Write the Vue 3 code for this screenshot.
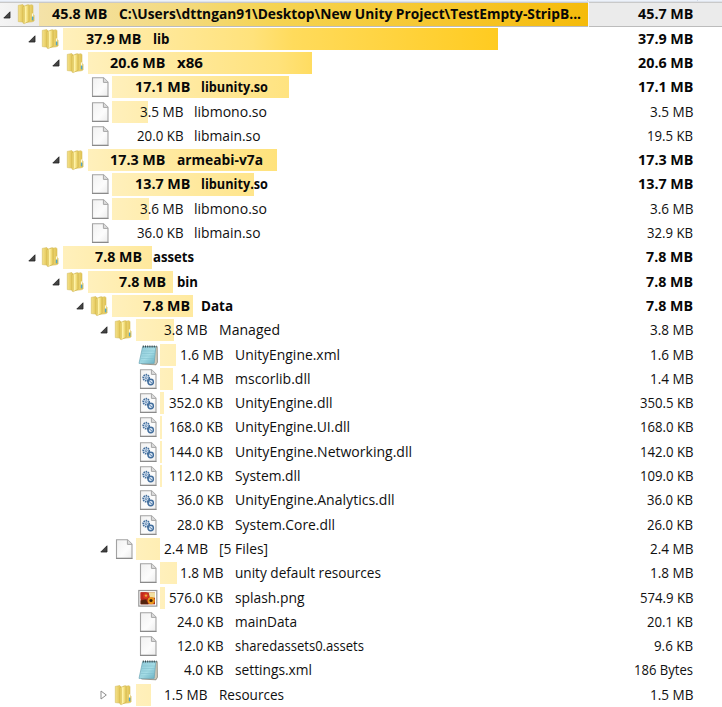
<script setup>
// depth, icon, bar width, size label, its width, name, name width, bold, total label, its width
const source = [
  [0, 'folder', 549, '45.8 MB', 55.5, 'C:\\Users\\dttngan91\\Desktop\\New Unity Project\\TestEmpty-StripB...', 462, 1, '45.7 MB', 55.5],
  [1, 'folder', 434.7, '37.9 MB', 55.5, 'lib', 16.5, 1, '37.9 MB', 55.5],
  [2, 'folder', 224.4, '20.6 MB', 55.5, 'x86', 26, 1, '20.6 MB', 55.5],
  [3, 'file', 177, '17.1 MB', 55.5, 'libunity.so', 67, 1, '17.1 MB', 55.5],
  [3, 'file', 36, '3.5 MB', 43.5, 'libmono.so', 73, 0, '3.5 MB', 43.5],
  [3, 'file', 0, '20.0 KB', 46.5, 'libmain.so', 66.5, 0, '19.5 KB', 46],
  [2, 'folder', 189.5, '17.3 MB', 55.5, 'armeabi-v7a', 86, 1, '17.3 MB', 55.5],
  [3, 'file', 142, '13.7 MB', 55.5, 'libunity.so', 67, 1, '13.7 MB', 55.5],
  [3, 'file', 37, '3.6 MB', 43.5, 'libmono.so', 73, 0, '3.6 MB', 43.5],
  [3, 'file', 0, '36.0 KB', 46.5, 'libmain.so', 66.5, 0, '32.9 KB', 46],
  [1, 'folder', 88.7, '7.8 MB', 47, 'assets', 41, 1, '7.8 MB', 47],
  [2, 'folder', 85, '7.8 MB', 47, 'bin', 21, 1, '7.8 MB', 47],
  [3, 'folder', 81, '7.8 MB', 47, 'Data', 32, 1, '7.8 MB', 47],
  [4, 'folder', 38, '3.8 MB', 43.5, 'Managed', 61, 0, '3.8 MB', 43.5],
  [5, 'note', 15.7, '1.6 MB', 43.5, 'UnityEngine.xml', 105, 0, '1.6 MB', 43.5],
  [5, 'dll', 12.3, '1.4 MB', 43.5, 'mscorlib.dll', 75.5, 0, '1.4 MB', 43.5],
  [5, 'dll', 4, '352.0 KB', 54, 'UnityEngine.dll', 97.5, 0, '350.5 KB', 53.5],
  [5, 'dll', 1.6, '168.0 KB', 54, 'UnityEngine.UI.dll', 115, 0, '168.0 KB', 53.5],
  [5, 'dll', 1.6, '144.0 KB', 54, 'UnityEngine.Networking.dll', 177, 0, '142.0 KB', 53.5],
  [5, 'dll', 1.4, '112.0 KB', 54, 'System.dll', 65.5, 0, '109.0 KB', 53.5],
  [5, 'dll', 0, '36.0 KB', 46.5, 'UnityEngine.Analytics.dll', 159.5, 0, '36.0 KB', 46],
  [5, 'dll', 0, '28.0 KB', 46.5, 'System.Core.dll', 100, 0, '26.0 KB', 46],
  [4, 'file', 24, '2.4 MB', 44, '[5 Files]', 49, 0, '2.4 MB', 43.5],
  [5, 'file', 16.7, '1.8 MB', 43.5, 'unity default resources', 146, 0, '1.8 MB', 43.5],
  [5, 'image', 4.8, '576.0 KB', 54, 'splash.png', 69.5, 0, '574.9 KB', 53.5],
  [5, 'file', 0, '24.0 KB', 46.5, 'mainData', 62, 0, '20.1 KB', 46],
  [5, 'file', 0, '12.0 KB', 46.5, 'sharedassets0.assets', 129, 0, '9.6 KB', 39],
  [5, 'note', 0, '4.0 KB', 39.5, 'settings.xml', 77, 0, '186 Bytes', 59],
  [4, 'folder', 15, '1.5 MB', 43.5, 'Resources', 65, 0, '1.5 MB', 43.5],
]

// distance from the bar's left edge to the right edge of the size label
const sizeColumn = (depth, bold) => {
  if (depth === 0) return 68.5
  if (depth === 3) return bold ? 78.5 : 71.3
  if (depth === 4) return 71.6
  if (depth === 5) return 63
  return 78.3
}

const rows = source.map(([depth, icon, bar, size, sizeW, name, nameW, bold, total, totalW], i) => ({
  depth, icon, bar, size, sizeW, name, nameW, bold: !!bold, total, totalW,
  toggle: i === source.length - 1 ? 'closed' : (icon === 'folder' || name === '[5 Files]') ? 'open' : '',
  sizeCol: sizeColumn(depth, bold),
}))
</script>

<template>
  <div class="tree">
    <svg width="0" height="0" class="defs">
      <defs>
        <linearGradient id="paper" x1="0" y1="0" x2="1" y2="1"><stop offset="0" stop-color="#f1f1f1" /><stop offset=".6" stop-color="#fcfcfc" /><stop offset="1" stop-color="#ececec" /></linearGradient>
        <linearGradient id="gold" x1="0" x2="1"><stop offset="0" stop-color="#ecd468" /><stop offset=".4" stop-color="#fff3a8" /><stop offset="1" stop-color="#e3c550" /></linearGradient>
        <linearGradient id="goldDark" x1="0" x2="1"><stop offset="0" stop-color="#f5e28a" /><stop offset="1" stop-color="#deBE4a" /></linearGradient>
        <linearGradient id="blue" x1="0" y1="0" x2="1" y2="1"><stop offset="0" stop-color="#8bc5d5" /><stop offset=".55" stop-color="#a5dce6" /><stop offset="1" stop-color="#66afc2" /></linearGradient>
      </defs>
    </svg>
    <div class="header"><i class="first" /><i class="second" /></div>
    <div v-for="(r, i) in rows" :key="i" class="row" :class="{ selected: i === 0, bold: r.bold }">
      <div class="name-cell" :style="{ paddingLeft: r.depth * 24.27 + 'px' }">
        <div class="toggle">
          <svg v-if="r.toggle === 'open'" width="8" height="8" viewBox="0 0 8 8"><path d="M7 .8V7H.8z" fill="#454545" stroke="#222" stroke-width=".8" stroke-linejoin="round" /></svg>
          <svg v-else-if="r.toggle === 'closed'" width="8" height="10" viewBox="0 0 8 10"><path d="M1 1l5.3 4L1 9z" fill="#fff" stroke="#8d8d8d" /></svg>
        </div>
        <svg class="icon" :class="r.icon" width="21" height="22" viewBox="0 0 21 22">
          <g v-if="r.icon === 'folder'">
            <path d="M10 2.4l6.2-.6.8 1v8.2l1.1 1.4V18l-2 .8-6.1.6z" fill="url(#goldDark)" stroke="#d8bf5c" stroke-width=".6" />
            <path d="M2.3 2.4L6.8 1.6l1.6 1.6v16L2.3 18.6z" fill="url(#goldDark)" stroke="#d4bc5c" stroke-width=".6" />
            <path d="M7 3.6l5.4-1.9.8 1v15.5L8.3 20.6 7 20.1z" fill="url(#gold)" stroke="#cdb24c" stroke-width=".6" />
            <path d="M8.4 4.2v15.4" stroke="#d6bb55" stroke-width=".6" />
            <path d="M16.6 10.4v3.4" stroke="#fdf9dc" stroke-width="1.4" />
            <path d="M16.6 13.6v3.7" stroke="#4da6d0" stroke-width="1.4" />
          </g>
          <g v-else-if="r.icon === 'file' || r.icon === 'dll'">
            <path d="M2.5 1.8h11l4.5 4.4v14.1H2.5z" fill="url(#paper)" stroke="#a2a2a2" stroke-width="1.1" />
            <path d="M13.4 1.8v4.6H18" fill="#dcdcdc" stroke="#a6a6a6" stroke-width="1" />
            <path d="M2 20.4h16.5" stroke="#858585" stroke-width="1" />
            <g v-if="r.icon === 'dll'" fill="#dce8f6" stroke="#416d9c">
              <circle cx="8.2" cy="9.7" r="3" stroke-width="1.7" stroke-dasharray="1.5 .7" />
              <circle cx="8.2" cy="9.7" r="1" stroke-width=".7" />
              <circle cx="12.7" cy="14" r="2.7" stroke-width="1.4" />
              <path d="M11.2 12.8l3 2.5m-5-2.8l1 2" stroke-width=".9" />
            </g>
          </g>
          <g v-else-if="r.icon === 'note'">
            <path d="M5 3l14.2-.4.2 15.6-1.4 2.6L3.5 20z" fill="#cfc8b7" stroke="#77756c" stroke-width=".7" />
            <path d="M4.6 2.7h13.2l-1.6 16.7H1z" fill="url(#blue)" stroke="#6aa5b5" stroke-width=".7" />
            <path d="M4.1 7h13M3.8 9.5h13M3.4 12h13M3 14.5h13M2.6 17h13" stroke="#7cbccb" stroke-width=".5" />
            <path d="M4.8 2.4h13.6" stroke="#34444a" stroke-width="2" stroke-dasharray="1 1.2" />
          </g>
          <g v-else>
            <rect x=".8" y="3.5" width="18" height="15.6" fill="#fff" stroke="#979797" stroke-width="1.2" />
            <rect x="2.6" y="5.3" width="14.4" height="12" fill="#a8281a" />
            <path d="M10.5 5.3H17v5.4h-5z" fill="#f1e0a4" />
            <path d="M2.6 5.3h6v6.5h-6z" fill="#c02a1e" />
            <circle cx="8" cy="8.8" r="2.9" fill="#d83a22" /><circle cx="8" cy="8.6" r="1.2" fill="#e8b03a" />
            <path d="M2.6 13.5l5.5-1 2.2 4.8H2.6z" fill="#54230f" />
            <circle cx="13.2" cy="13.6" r="3.6" fill="#e8971c" /><circle cx="13" cy="13.5" r="1.6" fill="#3c2109" />
          </g>
        </svg>
        <div class="content">
          <div class="bar" :style="{ width: r.bar + 'px' }" />
          <div class="label">
            <div class="size" :style="{ width: r.sizeCol + 'px' }">
              <svg class="text" :width="r.sizeW" height="22"><text x="0" y="15.6" :textLength="r.sizeW" lengthAdjust="spacingAndGlyphs">{{ r.size }}</text></svg>
            </div>
            <svg class="text" :width="r.nameW" height="22"><text x="0" y="15.6" :textLength="r.nameW" lengthAdjust="spacingAndGlyphs">{{ r.name }}</text></svg>
          </div>
        </div>
      </div>
      <div class="total-cell">
        <svg class="text" :width="r.totalW" height="22"><text x="0" y="15.6" :textLength="r.totalW" lengthAdjust="spacingAndGlyphs">{{ r.total }}</text></svg>
      </div>
    </div>
  </div>
</template>

<style>
body { background: #fff; overflow: hidden; }
</style>
<style scoped>
.tree { width: 722px; height: 707px; overflow: hidden; background: #fff; font-family: "Open Sans", "Noto Sans", sans-serif; font-size: 14.6px; color: #101010; display: flex; flex-direction: column; }
.defs { display: block; flex: none; }
.header { height: 2.4px; flex: none; background: linear-gradient(#edf2fa 0 1px, #cfd4dc 2px); display: flex; }
.header i { height: 1px; border-right: 1px solid #d0d9e5; box-sizing: border-box; }
.first { width: 588px; }
.second { width: 110px; }
.row { display: flex; height: 24.3px; flex: none; box-sizing: border-box; }
.selected { background: #ebebeb; box-shadow: inset 0 1px #c9c9c9, inset 0 -1px #bcbcbc; }
.name-cell { width: 588px; box-sizing: border-box; display: flex; flex: none; }
.selected .name-cell { background: linear-gradient(90deg, #f4f4f4, #ececec 39px, transparent 39px); box-shadow: inset 0 1px #c9c9c9, inset 0 -1px #bcbcbc; }
.toggle { width: 16px; flex: none; display: flex; align-items: center; padding-left: 3.4px; box-sizing: border-box; }
.icon { width: 21px; flex: none; margin: 1px 1px 0 1px; }
.icon.folder { margin: 1px 2px 0 0; }
.content { display: grid; flex: none; width: 549px; padding-top: 1px; box-sizing: border-box; }
.content > * { grid-area: 1 / 1; }
.bar { height: 22.2px; background-image: linear-gradient(90deg, #fff0bc 0, #ffe99e 85px, #ffe27b 190px, #ffdb5c 230px, #ffcb20 435px, #ffc000 549px); background-size: 549px 100%; background-repeat: no-repeat; }
.selected .bar { background-image: linear-gradient(90deg, #f4e2a8 0, #f3da80 140px, #f5d453 230px, #f6c52a 420px, #f5bb0b 549px); }
.label { display: flex; gap: 11.2px; height: 22px; }
.size { display: flex; justify-content: flex-end; flex: none; }
.text { display: block; flex: none; overflow: visible; }
.text text { fill: currentColor; }
.bold { font-weight: 700; color: #080808; }
.total-cell { width: 134px; box-sizing: border-box; padding: 1px 29px 0 0; display: flex; justify-content: flex-end; }
.selected .total-cell { border-left: 1px solid #f7f7f7; }
</style>
